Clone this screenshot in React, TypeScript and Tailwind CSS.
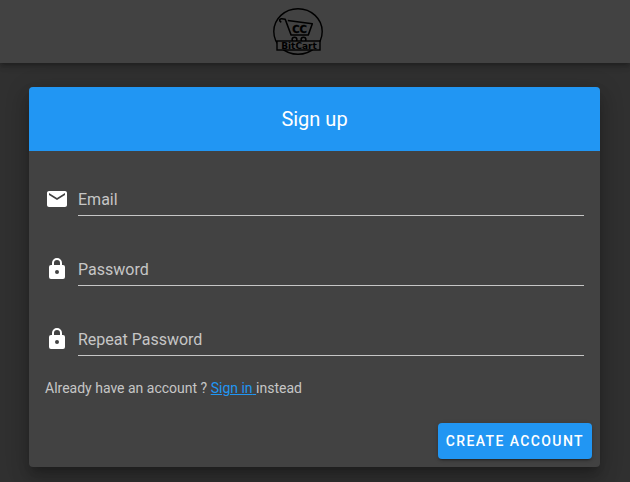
import React from "react";

const MAIL =
  "M20 4H4c-1.100 0-2 .9-2 2v12c0 1.100.9 2 2 2h16c1.100 0 2-.9 2-2V6c0-1.100-.9-2-2-2zm0 4l-8 5-8-5V6l8 5 8-5v2z";
const LOCK =
  "M12 17a2 2 0 1 0 0-4 2 2 0 0 0 0 4m6-9a2 2 0 0 1 2 2v10a2 2 0 0 1-2 2H6a2 2 0 0 1-2-2V10a2 2 0 0 1 2-2h1V6a5 5 0 0 1 10 0v2h1m-6-5a3 3 0 0 0-3 3v2h6V6a3 3 0 0 0-3-3z";

type FieldProps = {
  id: string;
  label: string;
  type: string;
  icon: string;
};

// The label rests inside the field and gives way to the text once something is typed.
function Field({ id, label, type, icon }: FieldProps) {
  return (
    <div className="flex gap-[9px] pt-4 pb-[21px]">
      <svg viewBox="0 0 24 24" className="mt-1 size-6 shrink-0 fill-white" aria-hidden="true">
        <path d={icon} />
      </svg>
      <div className="grid min-w-0 flex-1 border-b border-[#c6c6c6]">
        <input
          id={id}
          type={type}
          placeholder=" "
          className="peer col-start-1 row-start-1 h-8 w-full bg-transparent text-base text-white outline-none"
        />
        <label
          htmlFor={id}
          className="pointer-events-none invisible col-start-1 row-start-1 self-end text-base leading-[30px] text-[#c6c6c6] peer-placeholder-shown:visible"
        >
          {label}
        </label>
      </div>
    </div>
  );
}

function Logo() {
  return (
    <svg viewBox="0 0 52 49" className="h-[49px] w-[52px]" role="img" aria-label="BitCart">
      <g fill="none" stroke="#000" strokeWidth="1.400">
        <ellipse cx="26" cy="24.500" rx="24.200" ry="22.800" />
        <path
          d="M9.300 15.200c-2.600-1.200-1.900-3.600.3-3.500l3.600.6L19.100 28h17.200l4-11.300-24.500-3.200"
          strokeWidth="1.600"
          strokeLinejoin="round"
        />
        <circle cx="22.500" cy="32.600" r="2.400" strokeWidth="1.500" />
        <circle cx="31.500" cy="32.600" r="2.400" strokeWidth="1.500" />
        <rect x="5" y="34" width="43" height="9" fill="#424242" />
      </g>
      <g fontWeight="700" textAnchor="middle" fontFamily="DejaVu Sans, sans-serif">
        <text x="27.500" y="26.300" fontSize="10" stroke="#000" strokeWidth="0.300">
          CC
        </text>
        <text x="27" y="42" fontSize="9">
          BitCart
        </text>
      </g>
    </svg>
  );
}

export default function App() {
  return (
    <div className="min-h-screen bg-[#303030] font-['Roboto',sans-serif] text-white">
      <header className="relative flex h-[63px] items-center justify-center bg-[#424242] pr-[34px] shadow-[0_2px_4px_-1px_rgba(0,0,0,0.2),0_4px_5px_0_rgba(0,0,0,0.14),0_1px_10px_0_rgba(0,0,0,0.12)]">
        <Logo />
      </header>
      <main className="pt-6 pr-[30px] pl-[29px]">
        <form
          onSubmit={(e: React.FormEvent) => e.preventDefault()}
          className="overflow-hidden rounded bg-[#424242] shadow-[0_7px_8px_-4px_rgba(0,0,0,0.2),0_12px_17px_2px_rgba(0,0,0,0.14),0_5px_22px_4px_rgba(0,0,0,0.12)]"
        >
          <div className="flex h-16 items-center justify-center bg-[#2196f3]">
            <h1 className="text-xl font-normal">Sign up</h1>
          </div>
          <div className="p-4">
            <Field id="email" label="Email" type="email" icon={MAIL} />
            <Field id="password" label="Password" type="password" icon={LOCK} />
            <Field id="repeat-password" label="Repeat Password" type="password" icon={LOCK} />
            <p className="text-sm leading-[22px] text-[#c6c6c6]">
              Already have an account ?{" "}
              <a href="#signin" className="text-[#2196f3] underline">
                Sign in{" "}
              </a>
              instead
            </p>
          </div>
          <div className="flex justify-end p-2">
            <button
              type="submit"
              className="h-9 rounded bg-[#2196f3] px-2 text-sm font-medium tracking-widest uppercase shadow-[0_3px_1px_-2px_rgba(0,0,0,0.2),0_2px_2px_0_rgba(0,0,0,0.14),0_1px_5px_0_rgba(0,0,0,0.12)]"
            >
              Create account
            </button>
          </div>
        </form>
      </main>
    </div>
  );
}
